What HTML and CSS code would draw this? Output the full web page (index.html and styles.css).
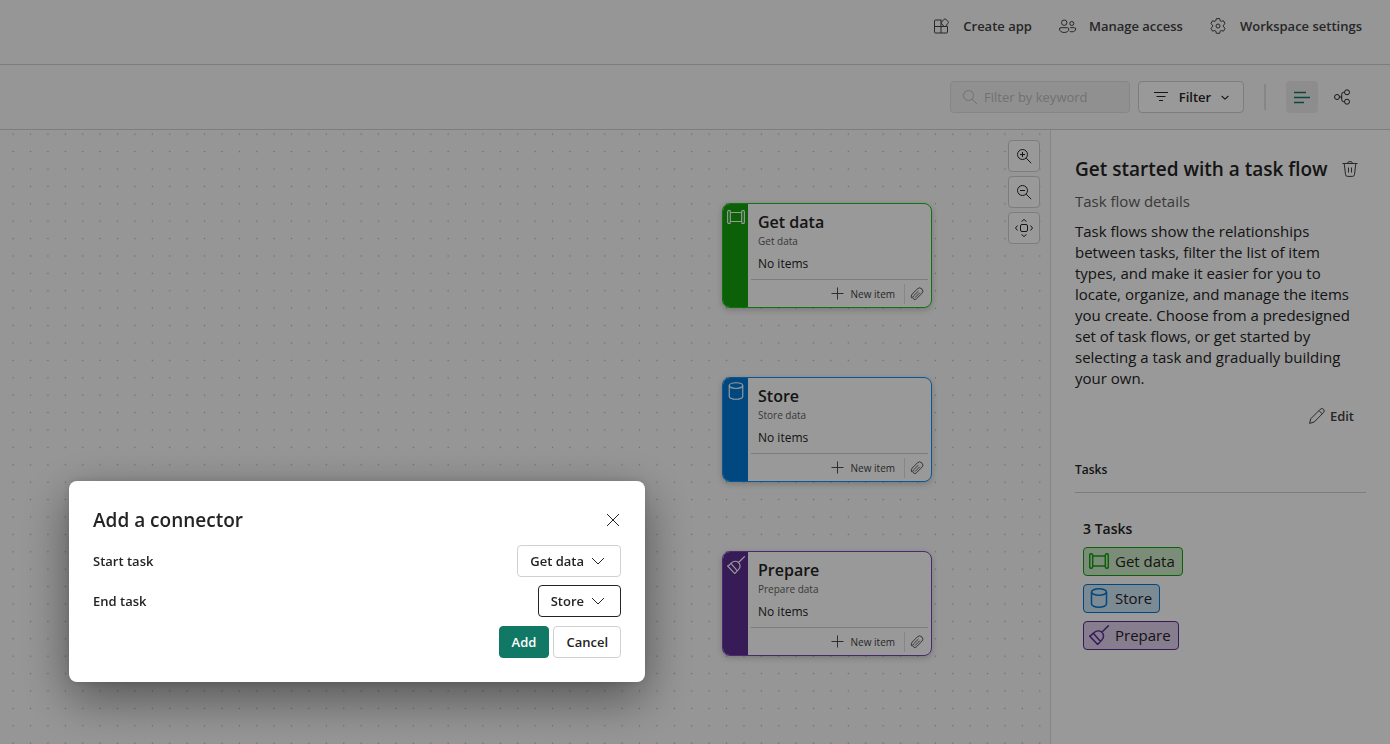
FILE: index.html
```html
<!DOCTYPE html>
<html lang="en">
<head>
<meta charset="utf-8">
<title>Task flow</title>
<link rel="stylesheet" href="styles.css">
</head>
<body>
<svg class="sprite" aria-hidden="true">
  <symbol id="i-pipe" viewBox="0 0 20 16"><rect x=".7" y=".7" width="3" height="14.600" rx="1.500"/><rect x="16.300" y=".7" width="3" height="14.600" rx="1.500"/><path d="M3.700 3h12.600M3.700 13h12.600"/></symbol>
  <symbol id="i-store" viewBox="0 0 18 20"><ellipse cx="9" cy="4" rx="7.500" ry="3.200"/><path d="M1.500 4v12c0 1.700 3.300 3.200 7.500 3.200s7.500-1.500 7.500-3.200V4"/></symbol>
  <symbol id="i-broom" viewBox="0 0 20 20"><path d="M19.800.3l-7 6.900M4.300 8.300c2.800-3 6.300-3 8.500-1.100s2.300 5.200.2 7.600L8.600 19.500.7 11.100q2-.8 3.600-2.800zM4.300 8.300l7.200 8.200"/></symbol>
  <symbol id="i-plus" viewBox="0 0 14 14"><path d="M7 .5v13M.5 7h13"/></symbol>
  <symbol id="i-clip" viewBox="0 0 16 16"><path d="M2.300 8.300L8.400 2.200a3.600 3.600 0 0 1 5.200 5.100L7.200 13.600a2.300 2.300 0 0 1-3.300-3.300l5.700-5.600M11.300 6.500l-5.600 5.600M2.300 8.300a3.800 3.800 0 0 0-.3 4.400"/></symbol>
  <symbol id="i-chev" viewBox="0 0 14 8"><path d="M1 1l6 6 6-6"/></symbol>
</svg>

<div class="app">
  <header class="topbar">
    <button class="topbar-btn" type="button">
      <svg class="icon" viewBox="0 0 16 16"><path d="M8.500 2H2.500a1 1 0 0 0-1 1v11a1 1 0 0 0 1 1h11a1 1 0 0 0 1-1V8.500H1.500M8 2v13M8.500 4.200L11.200 1.200q.8-.7 1.600 0l2.300 2.500q.6.800 0 1.500l-2.400 3.100M8.500 4.200q-.5.600 0 1.200L11 8.500"/></svg>Create app</button>
    <button class="topbar-btn" type="button">
      <svg class="icon" viewBox="0 0 16 16"><circle cx="5.200" cy="4.700" r="2.700"/><circle cx="12.800" cy="5.500" r="2"/><path d="M2 9.700h6.500a1.300 1.300 0 0 1 1.300 1.300c0 2-1.800 3.500-4.600 3.500S.5 13 .5 11A1.300 1.300 0 0 1 2 9.700zM11.200 9.700h4.300a1.200 1.200 0 0 1 1.200 1.200c0 1.700-1.500 2.900-3.700 2.900q-1.400 0-2.400-.5"/></svg>Manage access</button>
    <button class="topbar-btn" type="button">
      <svg class="icon" viewBox="0 0 16 16"><circle cx="8" cy="8" r="2"/><path d="M6.300.6h3.400l.5 2.200 1 .6 2.200-.7 1.700 2.900-1.700 1.500v1.700l1.700 1.500-1.700 2.900-2.200-.7-1 .6-.5 2.200H6.300l-.5-2.200-1-.6-2.200.7L.9 10.300l1.700-1.500V7.100L.9 5.600l1.700-2.900 2.200.7 1-.6z" stroke-linejoin="round"/></svg>Workspace settings</button>
  </header>

  <div class="toolbar">
    <div class="search">
      <svg class="icon" viewBox="0 0 16 16"><circle cx="6.500" cy="6.500" r="5"/><path d="M10.200 10.200l5 5"/></svg>
      <input type="text" placeholder="Filter by keyword" aria-label="Filter by keyword" disabled>
    </div>
    <button class="btn filter" type="button">
      <svg class="icon" viewBox="0 0 16 16"><path d="M1 3.500h14M3.500 7.500h9M6 11.500h4"/></svg>Filter<svg class="mini" viewBox="0 0 14 8"><use href="#i-chev"/></svg></button>
    <span class="divider"></span>
    <div class="views">
      <button class="view on" type="button" aria-label="List view"><svg class="icon" viewBox="0 0 16 16"><path d="M0 3.500h12M0 8.500h16M0 13.500h10"/></svg></button>
      <button class="view" type="button" aria-label="Lineage view"><svg class="icon" viewBox="0 0 16 16"><circle cx="3" cy="8" r="2.500"/><circle cx="13" cy="3.300" r="2.500"/><circle cx="13" cy="12.700" r="2.500"/><path d="M5.500 8h2.200M10.500 3.300h-.8a2 2 0 0 0-2 2v5.400a2 2 0 0 0 2 2h.8"/></svg></button>
    </div>
  </div>

  <div class="main">
    <section class="canvas" aria-label="Task flow canvas">
      <svg class="dots" aria-hidden="true">
        <pattern id="grid" width="20" height="20" patternUnits="userSpaceOnUse" patternTransform="translate(4 -5) scale(.87)"><circle cx="10.500" cy="10.500" r=".8"/></pattern>
        <rect width="100%" height="100%" fill="url(#grid)"/>
      </svg>
      <article class="node green node-1">
        <div class="strip"><svg class="glyph" viewBox="0 0 20 16"><use href="#i-pipe"/></svg></div>
        <div class="node-body">
          <h3>Get data</h3><p class="kind">Get data</p><p class="items">No items</p>
          <div class="node-foot"><button type="button"><svg class="plus" viewBox="0 0 14 14"><use href="#i-plus"/></svg>New item</button><button class="attach" type="button" aria-label="Attach"><svg class="clip" viewBox="0 0 16 16"><use href="#i-clip"/></svg></button></div>
        </div>
      </article>
      <article class="node blue node-2">
        <div class="strip"><svg class="glyph" viewBox="0 0 18 20"><use href="#i-store"/></svg></div>
        <div class="node-body">
          <h3>Store</h3><p class="kind">Store data</p><p class="items">No items</p>
          <div class="node-foot"><button type="button"><svg class="plus" viewBox="0 0 14 14"><use href="#i-plus"/></svg>New item</button><button class="attach" type="button" aria-label="Attach"><svg class="clip" viewBox="0 0 16 16"><use href="#i-clip"/></svg></button></div>
        </div>
      </article>
      <article class="node purple node-3">
        <div class="strip"><svg class="glyph" viewBox="0 0 20 20"><use href="#i-broom"/></svg></div>
        <div class="node-body">
          <h3>Prepare</h3><p class="kind">Prepare data</p><p class="items">No items</p>
          <div class="node-foot"><button type="button"><svg class="plus" viewBox="0 0 14 14"><use href="#i-plus"/></svg>New item</button><button class="attach" type="button" aria-label="Attach"><svg class="clip" viewBox="0 0 16 16"><use href="#i-clip"/></svg></button></div>
        </div>
      </article>
      <div class="zoom">
        <button class="btn" type="button" aria-label="Zoom in"><svg class="icon" viewBox="0 0 16 16"><circle cx="6.500" cy="6.500" r="5"/><path d="M10.200 10.200l5 5M6.500 4v5M4 6.500h5"/></svg></button>
        <button class="btn" type="button" aria-label="Zoom out"><svg class="icon" viewBox="0 0 16 16"><circle cx="6.500" cy="6.500" r="5"/><path d="M10.200 10.200l5 5M4 6.500h5"/></svg></button>
        <button class="btn" type="button" aria-label="Fit view"><svg class="icon fit" viewBox="0 0 18 18"><rect x="5.500" y="5.500" width="7" height="7" rx="1.500"/><path d="M6.500 2.500L9 .5l2.500 2M6.500 15.500l2.500 2 2.500-2M2.500 6.500L.5 9l2 2.500M15.500 6.500l2 2.500-2 2.500"/></svg></button>
      </div>
    </section>

    <aside class="panel">
      <div class="panel-head">
        <h2>Get started with a task flow</h2>
        <button class="plain" type="button" aria-label="Delete"><svg class="icon" viewBox="0 0 16 16"><path d="M.5 2.500h15M5.500 2.500a2.500 2 0 0 1 5 0M2.200 2.500l1.300 11a2 2 0 0 0 2 1.900h5a2 2 0 0 0 2-1.900l1.300-11M6.500 6.500v5M9.500 6.500v5"/></svg></button>
      </div>
      <p class="sub">Task flow details</p>
      <p class="desc">Task flows show the relationships between tasks, filter the list of item types, and make it easier for you to locate, organize, and manage the items you create. Choose from a predesigned set of task flows, or get started by selecting a task and gradually building your own.</p>
      <button class="plain edit" type="button"><svg class="icon" viewBox="0 0 16 16"><path d="M.6 15.400l1.200-4.700L11.200 1.300a2.200 2.200 0 0 1 3.300 3.300L5.200 14zM10 2.600L13.300 5.900" stroke-linejoin="round"/></svg>Edit</button>
      <h3 class="tasks-title">Tasks</h3>
      <div class="tasks">
        <h4>3 Tasks</h4>
        <button class="pill green" type="button"><svg class="glyph" viewBox="0 0 20 16"><use href="#i-pipe"/></svg>Get data</button>
        <button class="pill blue" type="button"><svg class="glyph" viewBox="0 0 18 20"><use href="#i-store"/></svg>Store</button>
        <button class="pill purple" type="button"><svg class="glyph" viewBox="0 0 20 20"><use href="#i-broom"/></svg>Prepare</button>
      </div>
    </aside>
  </div>
</div>

<div class="backdrop"></div>
<div class="dialog" role="dialog" aria-modal="true" aria-labelledby="dlg-title">
  <div class="dialog-head">
    <h2 id="dlg-title">Add a connector</h2>
    <button class="close" type="button" aria-label="Close"><svg viewBox="0 0 14 14"><path d="M1 1l12 12M13 1L1 13"/></svg></button>
  </div>
  <div class="field">
    <label for="start">Start task</label>
    <span class="select"><select id="start"><option selected>Get data</option><option>Store</option><option>Prepare</option></select><svg viewBox="0 0 14 8"><use href="#i-chev"/></svg></span>
  </div>
  <div class="field">
    <label for="end">End task</label>
    <span class="select active"><select id="end"><option>Get data</option><option selected>Store</option><option>Prepare</option></select><svg viewBox="0 0 14 8"><use href="#i-chev"/></svg></span>
  </div>
  <div class="actions">
    <button class="btn primary" type="button">Add</button>
    <button class="btn" type="button">Cancel</button>
  </div>
</div>
</body>
</html>
```

FILE: styles.css
```css
* { box-sizing: border-box; }
html, body { height: 100%; margin: 0; }
body {
  font: 13px/20px "Open Sans", "Noto Sans", sans-serif;
  color: #242424;
  background: #fafafa;
}
h2, h3, h4, p { margin: 0; }
button, input, select { font: inherit; color: inherit; }
button { cursor: pointer; }
svg { fill: none; stroke: currentColor; stroke-width: 1; flex: none; overflow: visible; }
.sprite { position: absolute; width: 0; height: 0; }
.icon { width: 16px; height: 16px; }

.app { display: flex; flex-direction: column; min-height: 100vh; }

.topbar {
  display: flex;
  justify-content: flex-end;
  gap: 27px;
  padding: 10px 28px 22px;
  border-bottom: 1px solid #d1d1d1;
}
.topbar-btn {
  display: flex;
  align-items: center;
  gap: 14px;
  height: 32px;
  padding: 0;
  border: 0;
  background: none;
  font-weight: 600;
  color: #424242;
}

.toolbar {
  display: flex;
  justify-content: flex-end;
  align-items: center;
  padding: 16px 32px;
  border-bottom: 1px solid #d1d1d1;
}
.search {
  display: flex;
  align-items: center;
  gap: 6px;
  width: 180px;
  height: 32px;
  padding: 0 11px;
  border: 1px solid #e0e0e0;
  border-radius: 4px;
  background: #f0f0f0;
  color: #bdbdbd;
}
.search input { min-width: 0; flex: 1; padding: 0; border: 0; background: none; }
.search input::placeholder { color: #bdbdbd; opacity: 1; }
.btn {
  display: flex;
  align-items: center;
  justify-content: center;
  height: 32px;
  padding: 0 12px;
  border: 1px solid #d1d1d1;
  border-radius: 4px;
  background: #fff;
  font-weight: 600;
}
.filter { width: 106px; margin-left: 8px; gap: 10px; }
.mini { width: 8px; height: 5px; stroke-width: 2; }
.divider { width: 2px; height: 26px; margin: 0 20px; background: #e0e0e0; }
.views { display: flex; gap: 8px; }
.view {
  display: grid;
  place-items: center;
  width: 32px;
  height: 32px;
  padding: 0;
  border: 0;
  border-radius: 4px;
  background: none;
}
.view.on { background: #ebebeb; color: #117865; }
.view.on svg { stroke-width: 1.5; }

.main { display: flex; flex: 1; }
.canvas { position: relative; flex: 1; overflow: hidden; }
.dots { position: absolute; inset: 0; width: 100%; height: 100%; }
.dots circle { fill: #7fc4b5; stroke: none; }
.dots rect { stroke: none; }

.green { --tone: #13a10e; --edge: #1fbf1a; --tint: #cdecc8; }
.blue { --tone: #0078d4; --edge: #1592f5; --tint: #cfe6f7; }
.purple { --tone: #5c2e91; --edge: #7d45bd; --tint: #dfd0ee; }

.node {
  position: absolute;
  left: 722px;
  display: flex;
  width: 210px;
  height: 105px;
  border: 1px solid var(--edge);
  border-radius: 8px;
  background: #fff;
  box-shadow: 0 2px 6px rgba(0, 0, 0, .2);
  overflow: hidden;
}
.node-1 { top: 73px; }
.node-2 { top: 247px; }
.node-3 { top: 421px; }
.strip { display: flex; justify-content: center; align-items: flex-start; width: 25px; padding-top: 4px; background: var(--tone); color: #fff; }
.strip .glyph { width: 18px; height: 18px; stroke-width: 1.3; }
.node-body { flex: 1; display: flex; flex-direction: column; }
.node-body h3 { padding: 6px 10px 0; font-size: 16px; line-height: 24px; font-weight: 600; }
.kind { padding: 0 10px; font-size: 10px; line-height: 14px; color: #616161; }
.items { padding: 6px 10px 5px; font-size: 12px; line-height: 20px; }
.node-foot {
  display: flex;
  justify-content: flex-end;
  flex: 1;
  align-items: center;
  margin: 0 3px;
  border-top: 1px solid #d1d1d1;
}
.node-foot button { display: flex; align-items: center; gap: 7px; height: 20px; padding: 0 9px; border: 0; background: none; font-size: 10px; color: #424242; }
.plus { width: 13px; height: 13px; }
.node-foot .attach { width: 24px; padding: 0 5px; border-left: 1px solid #e0e0e0; }
.clip { width: 14px; height: 14px; }

.zoom { position: absolute; top: 10px; right: 10px; display: grid; gap: 4px; }
.zoom .btn { width: 32px; padding: 0; }
.zoom .fit { width: 18px; height: 18px; }

.panel {
  width: 340px;
  padding: 24px;
  border-left: 1px solid #e0e0e0;
  background: #fff;
}
.panel-head { display: flex; justify-content: space-between; align-items: center; padding-right: 8px; }
.panel-head h2 { font-size: 19px; line-height: 30px; font-weight: 600; }
.plain { display: flex; align-items: center; gap: 5px; padding: 0; border: 0; background: none; font-weight: 600; color: #424242; }
.sub { padding-top: 7px; font-size: 15px; color: #616161; }
.desc { padding: 10px 12px 0 0; font-size: 15px; line-height: 21px; }
.edit { height: 32px; margin: 11px 12px 0 auto; }
.tasks-title { padding: 28px 0 12px; border-bottom: 1px solid #d1d1d1; font-size: 12px; font-weight: 600; }
.tasks { display: flex; flex-direction: column; align-items: flex-start; gap: 8px; padding: 26px 8px; }
.tasks h4 { font-size: 14px; font-weight: 600; }
.pill {
  display: flex;
  align-items: center;
  gap: 6px;
  height: 29px;
  padding: 0 7px 2px 5px;
  border: 1px solid var(--tone);
  border-radius: 4px;
  background: var(--tint);
  font-size: 15px;
}
.pill .glyph { width: 20px; height: 20px; color: var(--tone); stroke-width: 1.5; }

.backdrop { position: fixed; inset: 0; background: rgba(0, 0, 0, .4); }
.dialog {
  position: fixed;
  left: 69px;
  top: 481px;
  width: 576px;
  padding: 24px;
  border-radius: 8px;
  background: #fff;
  box-shadow: 0 0 8px rgba(0, 0, 0, .12), 0 16px 48px rgba(0, 0, 0, .45);
}
.dialog-head { display: flex; justify-content: space-between; align-items: center; height: 30px; margin-bottom: 10px; }
.dialog-head h2 { font-size: 19px; line-height: 28px; font-weight: 600; }
.close { display: grid; place-items: center; width: 16px; height: 16px; padding: 0; border: 0; background: none; }
.close svg { width: 14px; height: 14px; }
.field { display: flex; justify-content: space-between; align-items: center; margin-bottom: 8px; font-weight: 600; }
.select { display: grid; align-items: center; justify-items: end; }
.select select, .select svg { grid-area: 1 / 1; }
.select select {
  appearance: none;
  field-sizing: content;
  height: 32px;
  padding: 0 36px 0 12px;
  border: 1px solid #d1d1d1;
  border-radius: 4px;
  background: #fff;
}
.select.active select { border-color: #242424; }
.select svg { width: 14px; height: 8px; margin-right: 16px; pointer-events: none; }
.actions { display: flex; justify-content: flex-end; gap: 4px; padding-top: 1px; }
.actions .btn { padding: 0 12px; }
.actions .primary { border-color: #117865; background: #117865; color: #fff; }
```
